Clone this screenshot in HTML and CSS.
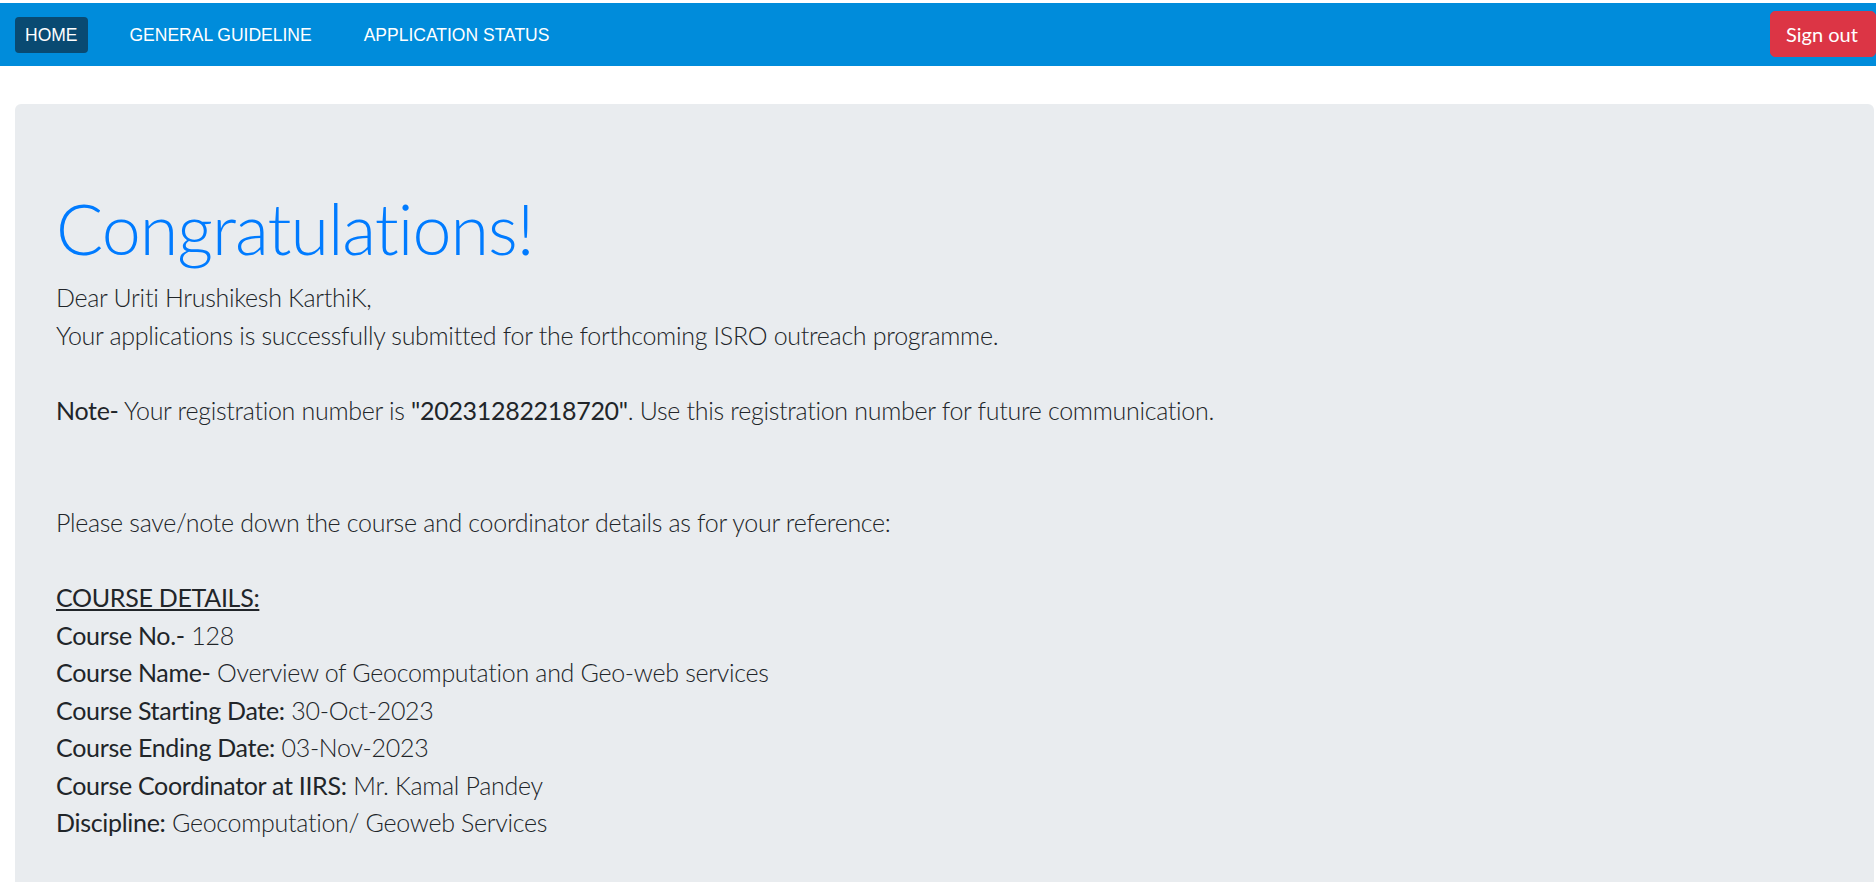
FILE: index.html
```html
<!DOCTYPE html>
<html lang="en">
<head>
<meta charset="utf-8">
<title>Application Submitted</title>
<link rel="stylesheet" href="styles.css">
</head>
<body>
<nav class="navbar">
  <ul class="nav-links">
    <li><a class="nav-link active" href="#">HOME</a></li>
    <li><a class="nav-link" href="#">GENERAL GUIDELINE</a></li>
    <li><a class="nav-link" href="#">APPLICATION STATUS</a></li>
  </ul>
  <button class="btn-signout" type="button">Sign out</button>
</nav>
<main class="jumbotron">
  <h1 class="display">Congratulations!</h1>
  <p class="lead">Dear Uriti Hrushikesh KarthiK,<br>Your applications is successfully submitted for the forthcoming ISRO outreach programme.<br><br><span class="strong">Note-</span> Your registration number is <span class="strong">"20231282218720"</span>. Use this registration number for future communication.<br><br><br>Please save/note down the course and coordinator details as for your reference:<br><br><span class="strong underline">COURSE DETAILS:</span><br><span class="strong">Course No.-</span> 128<br><span class="strong">Course Name-</span> Overview of Geocomputation and Geo-web services<br><span class="strong">Course Starting Date:</span> 30-Oct-2023<br><span class="strong">Course Ending Date:</span> 03-Nov-2023<br><span class="strong">Course Coordinator at IIRS:</span> Mr. Kamal Pandey<br><span class="strong">Discipline:</span> Geocomputation/ Geoweb Services</p>
</main>
</body>
</html>
```
FILE: styles.css
```css
html, body {
  margin: 0;
  padding: 0;
  background: #ffffff;
}

body {
  font-family: Lato, "Open Sans", "Liberation Sans", sans-serif;
  color: #212529;
  overflow: hidden;
}

.navbar {
  margin-top: 3px;
  height: 63px;
  background: #008cdb;
  display: flex;
  align-items: center;
  justify-content: space-between;
  padding-left: 15px;
}

.nav-links {
  list-style: none;
  margin: 0;
  padding: 0;
  display: flex;
  gap: 32px;
}

.nav-link {
  display: block;
  height: 36px;
  line-height: 36px;
  padding: 0 10px;
  font-family: "Liberation Sans", Arial, sans-serif;
  font-size: 17.5px;
  color: #ffffff;
  text-decoration: none;
  border-radius: 4px;
}

.nav-link.active {
  background: #094a72;
}

.btn-signout {
  width: 106px;
  height: 46px;
  margin-bottom: 2px;
  padding: 0 15px;
  border: 1px solid #dc3545;
  border-radius: 5px;
  background: #dc3545;
  color: #ffffff;
  font-family: Lato, "Open Sans", sans-serif;
  font-size: 20px;
  text-align: left;
  white-space: nowrap;
}

.jumbotron {
  margin: 38px 2px 0 15px;
  padding: 82px 40px 80px 41px;
  background: #e9ecef;
  border-radius: 6px;
  min-height: 800px;
}

.display {
  margin: 0 0 9px;
  font-size: 70px;
  font-weight: 300;
  line-height: 84px;
  letter-spacing: -1px;
  color: #007bff;
}

.lead {
  margin: 0;
  font-size: 25px;
  font-weight: 300;
  line-height: 37.5px;
  letter-spacing: -0.3px;
  color: #212529;
}

.strong {
  font-weight: 400;
}

.underline {
  text-decoration: underline;
}
```
